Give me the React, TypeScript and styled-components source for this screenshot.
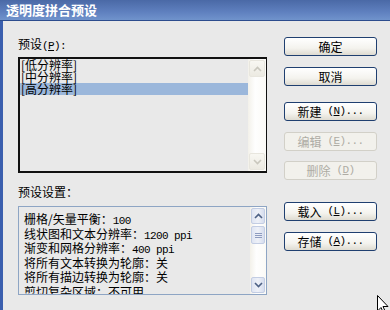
import React from "react";
import styled, { createGlobalStyle } from "styled-components";

const GlobalStyle = createGlobalStyle`
  html, body {
    margin: 0;
    padding: 0;
    overflow: hidden;
    background: #e9e9e9;
  }
  body {
    font-family: "Noto Sans CJK SC", "Liberation Sans", sans-serif;
    font-size: 12px;
    color: #000;
  }
`;

const Window = styled.div`
  position: relative;
  width: 390px;
  height: 310px;
  display: flex;
  flex-direction: column;
  overflow: hidden;
  background: #e9e9e9;
`;

const TitleBar = styled.div`
  flex: none;
  height: 20px;
  padding-left: 6px;
  display: flex;
  align-items: center;
  background: linear-gradient(#4a69a6, #5f80bf 60%, #7093cc);
  border-bottom: 1px solid #2d4d8e;
  color: #fff;
  font-size: 13px;
  font-weight: bold;
  line-height: 20px;
`;

const Body = styled.div`
  flex: 1;
  border-left: 3px solid #3b5fae;
  padding: 16px 0 0 15px;
  display: grid;
  grid-template-columns: 249px 93px;
  column-gap: 17px;
  align-items: start;
`;

const Column = styled.div`
  display: flex;
  flex-direction: column;
`;

const Label = styled.div<{ $top?: number }>`
  height: 14px;
  line-height: 14px;
  margin-top: ${(p) => p.$top ?? 0}px;
  white-space: nowrap;
`;

const Ascii = styled.span`
  font-family: "Liberation Mono", "DejaVu Sans Mono", monospace;
  font-size: 11px;
  letter-spacing: -0.6px;
  color: #000;
`;

const Key = styled.span`
  text-decoration: underline;
`;

const ListBox = styled.div`
  margin-top: 6px;
  height: 116px;
  box-sizing: border-box;
  border: 2px solid #111;
  border-right-width: 1px;
  display: flex;
  background: #e9e9e9;
`;

const Items = styled.div`
  flex: 1;
`;

const Item = styled.div<{ $selected?: boolean }>`
  height: 12px;
  line-height: 12px;
  padding-left: 1px;
  white-space: nowrap;
  background: ${(p) => (p.$selected ? "#9bb7db" : "transparent")};
`;

const Scroll = styled.div<{ $w: number }>`
  width: ${(p) => p.$w}px;
  flex: none;
  display: flex;
  flex-direction: column;
  justify-content: space-between;
  background: linear-gradient(90deg, #f3f1ea, #fefefe 40%, #fbfaf6);
`;

const ScrollButton = styled.div<{ $on?: boolean; $h: number }>`
  height: ${(p) => p.$h}px;
  box-sizing: border-box;
  margin: 1px;
  display: flex;
  align-items: center;
  justify-content: center;
  border: 1px solid ${(p) => (p.$on ? "#c3cde3" : "#e8e6de")};
  border-radius: 2px;
  background: ${(p) =>
    p.$on
      ? "linear-gradient(90deg, #dfe5f3, #eef1f8 50%, #d6ddee)"
      : "linear-gradient(#f8f7f2, #eceae2)"};
`;

const Track = styled.div`
  flex: 1;
  display: flex;
  flex-direction: column;
`;

const SettingsBox = styled.div`
  margin-top: 7px;
  height: 89px;
  box-sizing: border-box;
  border: 1px solid #8ea5c4;
  display: flex;
  overflow: hidden;
`;

const SettingsText = styled.div`
  flex: 1;
  padding: 5px 0 0 5px;
  white-space: nowrap;
  overflow: hidden;
`;

const SettingLine = styled.div`
  height: 14.5px;
  line-height: 14px;
`;

const Button = styled.div<{ $top: number; $disabled?: boolean }>`
  margin-top: ${(p) => p.$top}px;
  height: 19px;
  box-sizing: border-box;
  display: flex;
  align-items: center;
  justify-content: center;
  border: 1px solid ${(p) => (p.$disabled ? "#d2d0c8" : "#1f3f70")};
  border-radius: 3px;
  background: ${(p) =>
    p.$disabled ? "#f2f1ec" : "linear-gradient(#ffffff, #f4f3ee 60%, #dedbd1)"};
  color: ${(p) => (p.$disabled ? "#aeaca4" : "#000")};
  white-space: nowrap;
  line-height: 17px;

  ${Ascii} {
    color: inherit;
  }
`;

const Cursor = styled.svg`
  position: absolute;
  left: 377px;
  top: 295px;
`;

const Arrow = ({ down, color }: { down?: boolean; color: string }) => (
  <svg width="9" height="6" viewBox="0 0 9 6">
    <path
      d={down ? "M1 1 L4.5 4.5 L8 1" : "M1 5 L4.5 1.5 L8 5"}
      stroke={color}
      strokeWidth="1.6"
      fill="none"
    />
  </svg>
);

const Grip = () => (
  <svg width="7" height="7" viewBox="0 0 7 7">
    <path d="M0 1.5H7M0 3.5H7M0 5.5H7" stroke="#8d9bbf" strokeWidth="1" />
  </svg>
);

const settings: [string, string][] = [
  ["栅格/矢量平衡：", "100"],
  ["线状图和文本分辨率：", "1200 ppi"],
  ["渐变和网格分辨率：", "400 ppi"],
  ["将所有文本转换为轮廓：", "关"],
  ["将所有描边转换为轮廓：", "关"],
  ["剪切复杂区域：", "不可用"],
];

const isAscii = (s: string) => /^[\x00-\x7f]+$/.test(s);

export default function App() {
  return (
    <>
      <GlobalStyle />
      <Window>
        <TitleBar>透明度拼合预设</TitleBar>
        <Body>
          <Column>
            <Label>
              预设<Ascii>(<Key>P</Key>):</Ascii>
            </Label>
            <ListBox>
              <Items>
                <Item>[低分辨率]</Item>
                <Item>[中分辨率]</Item>
                <Item $selected>[高分辨率]</Item>
              </Items>
              <Scroll $w={18}>
                <ScrollButton $h={17}>
                  <Arrow color="#c9c7bd" />
                </ScrollButton>
                <ScrollButton $h={17}>
                  <Arrow down color="#c9c7bd" />
                </ScrollButton>
              </Scroll>
            </ListBox>
            <Label $top={12}>预设设置：</Label>
            <SettingsBox>
              <SettingsText>
                {settings.map(([k, v]) => (
                  <SettingLine key={k}>
                    {k}
                    {isAscii(v) ? <Ascii>{v}</Ascii> : v}
                  </SettingLine>
                ))}
              </SettingsText>
              <Scroll $w={16}>
                <ScrollButton $on $h={16}>
                  <Arrow color="#4d6185" />
                </ScrollButton>
                <Track>
                  <ScrollButton $on $h={18}>
                    <Grip />
                  </ScrollButton>
                </Track>
                <ScrollButton $on $h={16}>
                  <Arrow down color="#4d6185" />
                </ScrollButton>
              </Scroll>
            </SettingsBox>
          </Column>
          <Column>
            <Button $top={0}>确定</Button>
            <Button $top={11}>取消</Button>
            <Button $top={16}>
              新建<Ascii>&nbsp;(<Key>N</Key>)...</Ascii>
            </Button>
            <Button $top={11} $disabled>
              编辑<Ascii>&nbsp;(<Key>E</Key>)...</Ascii>
            </Button>
            <Button $top={10} $disabled>
              删除<Ascii>&nbsp;(<Key>D</Key>)</Ascii>
            </Button>
            <Button $top={22}>
              载入<Ascii>&nbsp;(<Key>L</Key>)...</Ascii>
            </Button>
            <Button $top={11}>
              存储<Ascii>&nbsp;(<Key>A</Key>)...</Ascii>
            </Button>
          </Column>
        </Body>
        <Cursor width="12" height="19" viewBox="0 0 12 19">
          <path d="M0.5 0.5 L0.5 16 L4 12.5 L6.5 18 L8.5 17 L6 11.5 L11 11.5 Z" fill="#fff" stroke="#000" strokeWidth="1" />
        </Cursor>
      </Window>
    </>
  );
}
